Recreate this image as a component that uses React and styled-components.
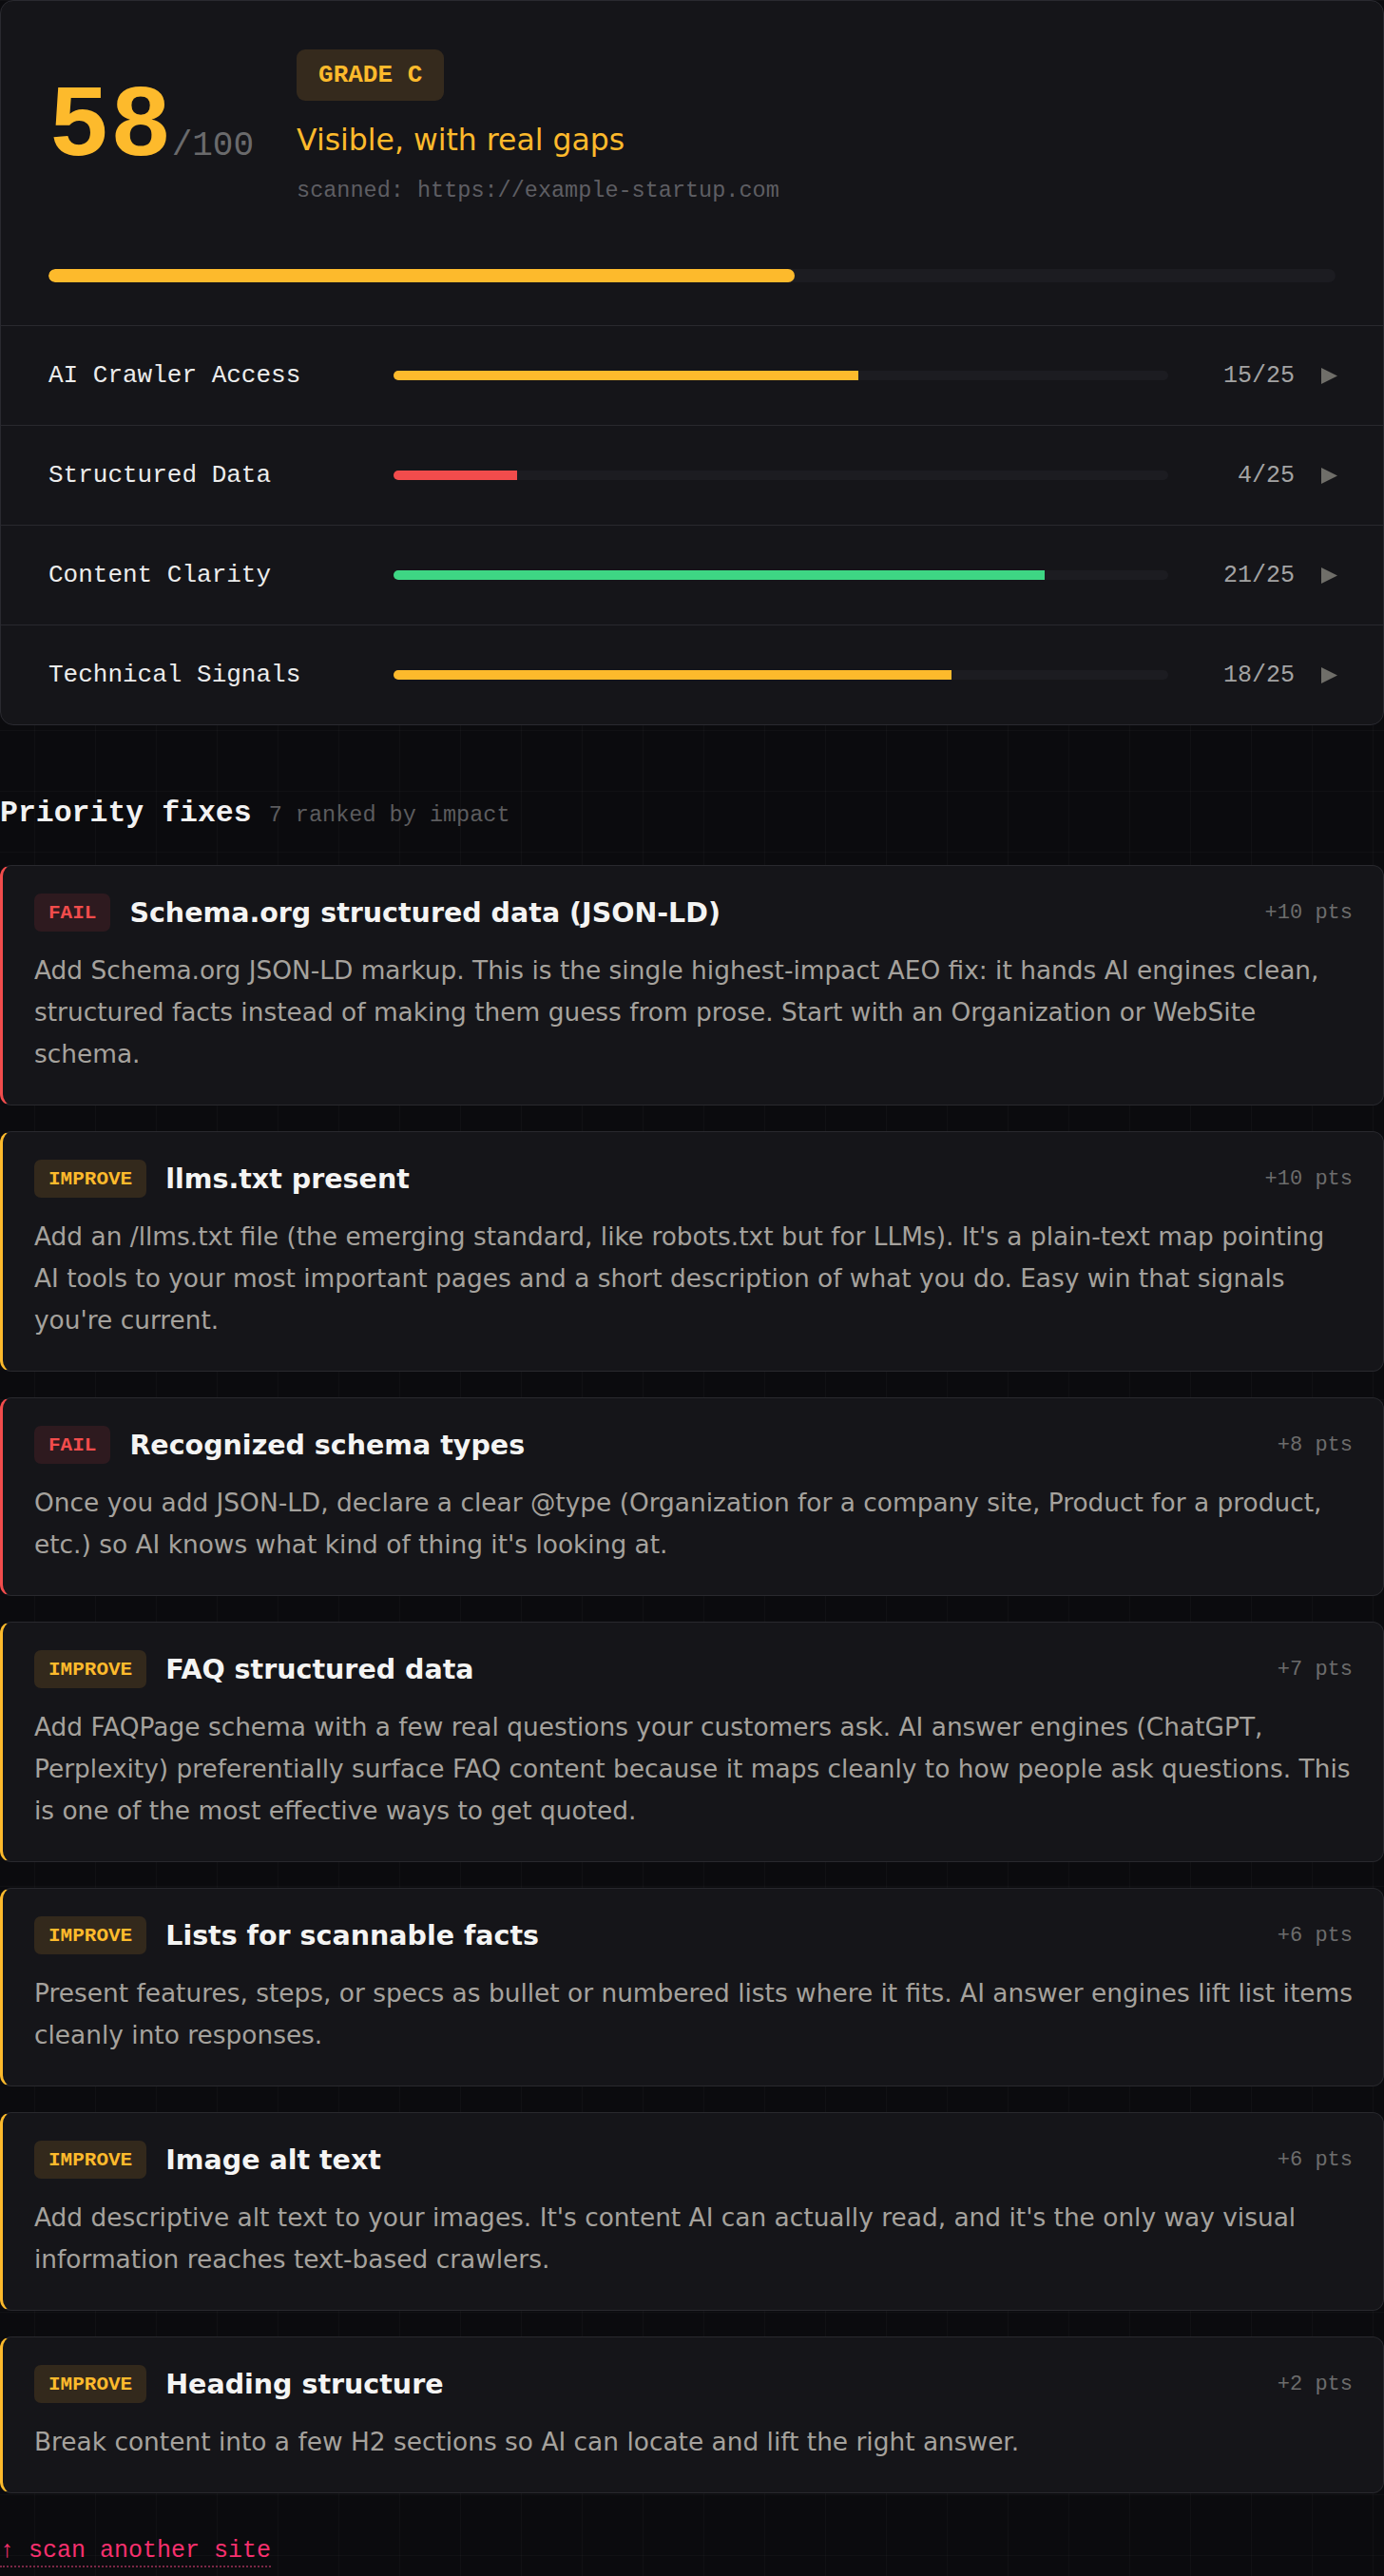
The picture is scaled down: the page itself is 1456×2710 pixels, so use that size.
import styled, { createGlobalStyle } from "styled-components";

const MONO = `"Liberation Mono", "DejaVu Sans Mono", monospace`;
const SANS = `"DejaVu Sans", "Liberation Sans", sans-serif`;

const AMBER = "#fdba2c";
const RED = "#f24c4c";
const GREEN = "#3ed684";

const CATEGORIES = [
  { name: "AI Crawler Access", score: 15, max: 25 },
  { name: "Structured Data", score: 4, max: 25 },
  { name: "Content Clarity", score: 21, max: 25 },
  { name: "Technical Signals", score: 18, max: 25 },
];

const FIXES = [
  {
    status: "fail",
    title: "Schema.org structured data (JSON-LD)",
    pts: 10,
    body: "Add Schema.org JSON-LD markup. This is the single highest-impact AEO fix: it hands AI engines clean, structured facts instead of making them guess from prose. Start with an Organization or WebSite schema.",
  },
  {
    status: "improve",
    title: "llms.txt present",
    pts: 10,
    body: "Add an /llms.txt file (the emerging standard, like robots.txt but for LLMs). It's a plain-text map pointing AI tools to your most important pages and a short description of what you do. Easy win that signals you're current.",
  },
  {
    status: "fail",
    title: "Recognized schema types",
    pts: 8,
    body: "Once you add JSON-LD, declare a clear @type (Organization for a company site, Product for a product, etc.) so AI knows what kind of thing it's looking at.",
  },
  {
    status: "improve",
    title: "FAQ structured data",
    pts: 7,
    body: "Add FAQPage schema with a few real questions your customers ask. AI answer engines (ChatGPT, Perplexity) preferentially surface FAQ content because it maps cleanly to how people ask questions. This is one of the most effective ways to get quoted.",
  },
  {
    status: "improve",
    title: "Lists for scannable facts",
    pts: 6,
    body: "Present features, steps, or specs as bullet or numbered lists where it fits. AI answer engines lift list items cleanly into responses.",
  },
  {
    status: "improve",
    title: "Image alt text",
    pts: 6,
    body: "Add descriptive alt text to your images. It's content AI can actually read, and it's the only way visual information reaches text-based crawlers.",
  },
  {
    status: "improve",
    title: "Heading structure",
    pts: 2,
    body: "Break content into a few H2 sections so AI can locate and lift the right answer.",
  },
];

const barColor = (ratio) => (ratio < 0.4 ? RED : ratio < 0.8 ? AMBER : GREEN);

const GlobalStyle = createGlobalStyle`
  * { box-sizing: border-box; }
  body {
    margin: 0;
    background: #0b0b0e;
    font-family: ${SANS};
  }
`;

const Page = styled.div`
  min-height: 100vh;
  padding-bottom: 12px;
  background-color: #0b0b0e;
  background-image:
    linear-gradient(to right, rgba(255, 255, 255, 0.022) 1px, transparent 1px),
    linear-gradient(to bottom, rgba(255, 255, 255, 0.022) 1px, transparent 1px);
  background-size: 64px 64px;
  background-position: 36px 0;
`;

const ScoreCard = styled.section`
  background: #151519;
  border: 1px solid #2a2a30;
  border-radius: 14px;
  overflow: hidden;
`;

const Summary = styled.div`
  padding: 51px 50px 45px;
`;

const SummaryTop = styled.div`
  display: flex;
  align-items: center;
  gap: 45px;
`;

const BigScore = styled.div`
  display: flex;
  align-items: baseline;
  font-family: ${MONO};
`;

const ScoreNum = styled.span`
  font-size: 108px;
  font-weight: 700;
  line-height: 1;
  color: ${AMBER};
`;

const ScoreMax = styled.span`
  font-size: 36px;
  color: #6a6a6c;
`;

const Meta = styled.div`
  display: flex;
  flex-direction: column;
  align-items: flex-start;
`;

const GradeBadge = styled.span`
  display: inline-flex;
  align-items: center;
  height: 54px;
  padding: 0 23px;
  border-radius: 9px;
  background: #352a1d;
  color: ${AMBER};
  font-family: ${MONO};
  font-weight: 700;
  font-size: 26px;
`;

const Verdict = styled.div`
  margin-top: 21px;
  font-size: 31.5px;
  line-height: 40px;
  color: ${AMBER};
`;

const Scanned = styled.div`
  margin-top: 20px;
  font-family: ${MONO};
  font-size: 23.5px;
  line-height: 28px;
  color: #5e5e63;
`;

const Track = styled.div`
  height: ${(p) => p.$h}px;
  border-radius: ${(p) => p.$h / 2}px;
  background: #1c1c21;
  overflow: hidden;
`;

const Fill = styled.div`
  height: 100%;
  background: ${(p) => p.$color};
  border-radius: ${(p) => (p.$round ? "999px" : "0")};
`;

const TotalBar = styled(Track)`
  margin-top: 68px;
`;

const CategoryRow = styled.div`
  display: grid;
  grid-template-columns: 363px 1fr 133px 45px;
  align-items: center;
  height: 105px;
  padding: 0 48px 0 50px;
  border-top: 1px solid #29292e;
`;

const CategoryName = styled.span`
  font-family: ${MONO};
  font-size: 26px;
  color: #ececec;
`;

const CategoryScore = styled.span`
  font-family: ${MONO};
  font-size: 25px;
  color: #a3a3a3;
  text-align: right;
`;

const CaretCell = styled.span`
  display: flex;
  justify-content: flex-end;
`;

const Caret = () => (
  <CaretCell>
    <svg width="17" height="17" viewBox="0 0 17 17">
      <polygon points="0,0 17,8.5 0,17" fill="#6f6e69" />
    </svg>
  </CaretCell>
);

const SectionHead = styled.h2`
  display: flex;
  align-items: baseline;
  gap: 18px;
  margin: 74px 0 33px;
  font-family: ${MONO};
  font-weight: 700;
  font-size: 31.5px;
  line-height: 38px;
  color: #f2f2f2;
`;

const SectionNote = styled.span`
  font-size: 23.5px;
  font-weight: 400;
  color: #5c5c5e;
`;

const FixList = styled.div`
  display: flex;
  flex-direction: column;
  gap: 27px;
`;

const FixCard = styled.article`
  padding: 29px 32px 31px 33px;
  background: #151519;
  border: 1px solid #29292e;
  border-left: 3px solid ${(p) => (p.$status === "fail" ? RED : AMBER)};
  border-radius: 12px;
`;

const FixHeader = styled.div`
  display: flex;
  align-items: center;
  gap: 20px;
  height: 40px;
  margin-bottom: 19px;
`;

const StatusBadge = styled.span`
  display: inline-flex;
  align-items: center;
  height: 40px;
  padding: 0 15px;
  border-radius: 7px;
  font-family: ${MONO};
  font-weight: 700;
  font-size: 21px;
  background: ${(p) => (p.$status === "fail" ? "#2e1a1f" : "#33291c")};
  color: ${(p) => (p.$status === "fail" ? RED : AMBER)};
`;

const FixTitle = styled.h3`
  flex: 1;
  margin: 0;
  font-size: 28.5px;
  font-weight: 700;
  color: #f4f4f3;
`;

const Points = styled.span`
  font-family: ${MONO};
  font-size: 22px;
  color: #6c6c6c;
`;

const FixBody = styled.p`
  margin: 0;
  font-size: 26.4px;
  line-height: 44px;
  color: #a5a29d;
`;

const BackLink = styled.a`
  display: inline-block;
  margin-top: 46px;
  font-family: ${MONO};
  font-size: 25px;
  line-height: 30px;
  color: #f7306e;
  text-decoration: none;
  border-bottom: 2px dotted #7a2745;
  cursor: pointer;
`;

export default function App() {
  const total = CATEGORIES.reduce((s, c) => s + c.score, 0);

  return (
    <Page>
      <GlobalStyle />
      <ScoreCard>
        <Summary>
          <SummaryTop>
            <BigScore>
              <ScoreNum>{total}</ScoreNum>
              <ScoreMax>/100</ScoreMax>
            </BigScore>
            <Meta>
              <GradeBadge>GRADE C</GradeBadge>
              <Verdict>Visible, with real gaps</Verdict>
              <Scanned>scanned: https://example-startup.com</Scanned>
            </Meta>
          </SummaryTop>
          <TotalBar $h={14}>
            <Fill $round $color={AMBER} style={{ width: `${total}%` }} />
          </TotalBar>
        </Summary>

        {CATEGORIES.map((c) => {
          const ratio = c.score / c.max;
          return (
            <CategoryRow key={c.name}>
              <CategoryName>{c.name}</CategoryName>
              <Track $h={10}>
                <Fill $color={barColor(ratio)} style={{ width: `${ratio * 100}%` }} />
              </Track>
              <CategoryScore>
                {c.score}/{c.max}
              </CategoryScore>
              <Caret />
            </CategoryRow>
          );
        })}
      </ScoreCard>

      <SectionHead>
        Priority fixes <SectionNote>{FIXES.length} ranked by impact</SectionNote>
      </SectionHead>

      <FixList>
        {FIXES.map((f) => (
          <FixCard key={f.title} $status={f.status}>
            <FixHeader>
              <StatusBadge $status={f.status}>
                {f.status === "fail" ? "FAIL" : "IMPROVE"}
              </StatusBadge>
              <FixTitle>{f.title}</FixTitle>
              <Points>+{f.pts} pts</Points>
            </FixHeader>
            <FixBody>{f.body}</FixBody>
          </FixCard>
        ))}
      </FixList>

      <BackLink>↑ scan another site</BackLink>
    </Page>
  );
}
